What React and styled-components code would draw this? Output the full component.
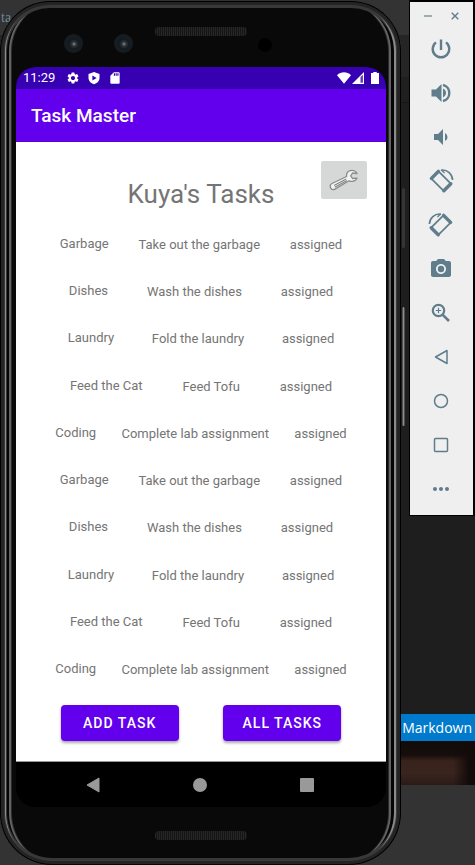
import React from "react";
import styled, { createGlobalStyle } from "styled-components";
import {
  MdVolumeDown,
  MdPhotoCamera,
  MdMoreHoriz,
  MdSettings,
  MdSdCard,
} from "react-icons/md";

const GlobalStyle = createGlobalStyle`
  *, *::before, *::after { box-sizing: border-box; }
  body { margin: 0; background: #1e1e1e; font-family: Roboto, "Liberation Sans", sans-serif; }
  button { font: inherit; border: 0; padding: 0; cursor: pointer; }
  svg { display: block; }
`;

const Desktop = styled.div`
  display: grid;
  grid-template-columns: minmax(0, 1fr) 74px;
  min-height: 100vh;
`;

/* Editor window visible behind the emulator */
const Editor = styled.div`
  grid-area: 1 / 1 / 2 / 3;
  display: flex;
  flex-direction: column;
`;
const EditorTitle = styled.div`
  height: 35px;
  padding: 9px 1px;
  background: #333;
  color: #74899b;
  font: 14px/18px "Liberation Serif", serif;
`;
const EditorTabs = styled.div`
  height: 42px;
  background: #252526;
`;
const EditorCrumbs = styled.div`
  height: 26px;
  background: #1f1f1f;
  border-bottom: 1px solid #161616;
`;
const EditorBody = styled.div`
  flex: 1;
  background: #1e1e1e;
`;
const EditorStatus = styled.div`
  display: flex;
  align-items: center;
  justify-content: flex-end;
  height: 27px;
  padding-right: 3px;
  background: #007acc;
  color: #fff;
  font: 14px/20px "Open Sans", sans-serif;
`;
const VideoStrip = styled.div`
  height: 44px;
  background:
    linear-gradient(to right, transparent calc(100% - 22px), #130b0a calc(100% - 6px)),
    linear-gradient(#120b0a 0, #160e0c 14px, #38231c 20px, #3a251e 32px, #2a1b17 44px);
`;
const Taskbar = styled.div`
  height: 80px;
  background: #333;
`;

const Phone = styled.main`
  position: relative;
  grid-area: 1 / 1;
  display: flex;
  flex-direction: column;
  margin-top: 1px;
  padding: 0 15px 0 16px;
  border-radius: 50px 50px 52px 52px;
  background: #090909;
  box-shadow:
    inset 0 0 0 1px #000,
    inset 0 0 0 4px #242424,
    inset 0 0 0 5px #3a3a3a,
    inset 6px 0 0 0 #8a8a8a,
    inset -7px 0 0 0 #8a8a8a,
    inset 0 0 0 7px #383838,
    inset 9px 0 0 0 #050505,
    inset -10px 0 0 0 #050505,
    inset 11px 0 0 0 #626267,
    inset -12px 0 0 0 #626267,
    inset 12px 0 0 0 #2a2a2a,
    inset -13px 0 0 0 #2a2a2a;
`;
const SideKey = styled.span`
  position: absolute;
  right: -4px;
  top: ${(p) => p.$top};
  width: 3px;
  height: ${(p) => p.$height};
  border-radius: 2px;
  background: ${(p) => p.$color};
`;
const TopBezel = styled.div`
  display: grid;
  grid-template-columns: 1fr 92px 1fr;
  height: 66px;
  padding-top: 26px;
`;
const BottomBezel = styled.div`
  display: flex;
  justify-content: center;
  height: 58px;
  padding-top: 24px;
`;
const Grille = styled.div`
  width: 92px;
  height: 9px;
  border-radius: 4px;
  background: repeating-linear-gradient(to right, #262626 0 1px, #151515 1px 2px);
`;
const Lenses = styled.div`
  display: flex;
  gap: 31px;
  padding: 7px 0 0 48px;
`;
const Lens = styled.span`
  width: 19px;
  height: 19px;
  border: 4px solid #151d22;
  border-radius: 50%;
  background: radial-gradient(circle at 55% 55%, #696e73 0 1px, #30363b 2px, #14191d 5px);
`;
const Sensor = styled.span`
  width: 14px;
  height: 14px;
  margin: 11px 0 0 11px;
  border-radius: 50%;
  background: #000;
`;

const Screen = styled.section`
  flex: 1;
  display: flex;
  flex-direction: column;
  overflow: hidden;
  border-radius: 20px;
  background: #000;
`;
const StatusBar = styled.div`
  display: flex;
  align-items: center;
  gap: 7px;
  height: 22px;
  padding: 0 7px;
  background: #3700b3;
  color: #fff;
`;
const Clock = styled.time`
  margin-right: 4px;
  font-size: 13px;
  line-height: 22px;
`;
const StatusIcons = styled.div`
  display: flex;
  align-items: center;
  gap: ${(p) => p.$gap};
  margin-left: ${(p) => (p.$end ? "auto" : "0")};
`;
const AppBar = styled.header`
  display: flex;
  align-items: center;
  height: 53px;
  padding: 2px 15px 0;
  border-bottom: 1px solid #5b00d6;
  background: #6200ee;
  color: #fff;
`;
const AppTitle = styled.h1`
  margin: 0;
  font-size: 19px;
  line-height: 24px;
  font-weight: 500;
`;
const Content = styled.div`
  flex: 1;
  display: flex;
  flex-direction: column;
  background: #fff;
  color: #757575;
`;
const Heading = styled.div`
  display: grid;
  grid-template-columns: 1fr auto 1fr;
  padding: 19px 19px 0;
`;
const PageTitle = styled.h2`
  grid-column: 2;
  margin: 14px 0 0;
  font-size: 26px;
  line-height: 38px;
  font-weight: 400;
`;
const SettingsButton = styled.button`
  justify-self: end;
  display: grid;
  place-items: center;
  width: 46px;
  height: 38px;
  border-radius: 2px;
  background: #d6d7d7;
`;
const TaskList = styled.ul`
  flex: 1;
  display: grid;
  grid-auto-rows: 1fr;
  margin: 8px 14px 0;
  padding: 0;
  list-style: none;
`;
const TaskRow = styled.li`
  display: flex;
  align-items: center;
  justify-content: space-evenly;
  font-size: 13px;
  line-height: 18px;
`;
const TaskName = styled.span`
  padding-bottom: 2px;
`;
const Actions = styled.div`
  display: flex;
  justify-content: space-evenly;
  padding: 11px 0 20px;
`;
const ActionButton = styled.button`
  width: 118px;
  height: 36px;
  border-radius: 4px;
  background: #6200ee;
  box-shadow: 0 2px 3px rgba(0, 0, 0, 0.35);
  color: #fff;
  font-size: 14px;
  font-weight: 500;
  letter-spacing: 1px;
  text-transform: uppercase;
`;
const NavBar = styled.nav`
  display: flex;
  align-items: center;
  justify-content: center;
  gap: 87px;
  height: 46px;
  padding-right: 2px;
  border-top: 1px solid #999;
  background: #000;
`;
const NavButton = styled.button`
  display: grid;
  place-items: center;
  width: 20px;
  height: 20px;
  background: none;
`;

const Toolbar = styled.aside`
  grid-area: 1 / 2;
  align-self: start;
  justify-self: end;
  display: flex;
  flex-direction: column;
  width: 66px;
  height: 516px;
  padding-right: 2px;
  border: 1px solid #000;
  border-width: 2px 2px 1px 1px;
  background: #efefef;
  color: #5f7d8b;
`;
const WindowControls = styled.div`
  display: flex;
  justify-content: center;
  gap: 11px;
  height: 25px;
  padding: 6px 0 0 1px;
`;
const ToolButton = styled.button`
  display: grid;
  place-items: center;
  width: ${(p) => (p.$small ? "16px" : "100%")};
  height: ${(p) => (p.$small ? "16px" : "44px")};
  background: none;
  color: inherit;
`;

const Power = () => (
  <svg width="24" height="24" viewBox="0 0 24 24" fill="none" stroke="currentColor" strokeWidth="2.400">
    <path d="M12 2.500V13" />
    <path d="M7 5.400A8.300 8.300 0 1 0 17 5.400" />
  </svg>
);
const VolumeUp = () => (
  <svg width="24" height="24" viewBox="0 0 24 24" fill="currentColor">
    <path d="M2.500 8.500V15.500H7L12.500 21V3L7 8.500Z" />
    <path d="M14 7.600C15.800 8.500 17 10.100 17 12S15.800 15.500 14 16.400Z" />
    <path d="M14 4C17.700 4.800 20.300 8 20.300 12S17.700 19.200 14 20" fill="none" stroke="currentColor" strokeWidth="2.400" />
  </svg>
);
const ZoomGlass = () => (
  <svg width="24" height="24" viewBox="0 0 24 24" fill="none" stroke="currentColor">
    <circle cx="9.500" cy="9.500" r="5.700" strokeWidth="2.200" />
    <path d="M13.800 13.800 20 20" strokeWidth="2.600" />
    <path d="M9.500 6.800V12.200M6.800 9.500H12.200" strokeWidth="1.200" />
  </svg>
);
const Rotate = ({ flip }) => (
  <svg width="26" height="26" viewBox="0 0 26 26" fill="none" stroke="currentColor">
    <g transform={flip ? "translate(26 0) scale(-1 1)" : undefined}>
      <path d="M10.800 3.600 22.600 15.400 15.400 22.600 3.600 10.800Z" strokeWidth="1.700" strokeLinejoin="round" />
      <path d="M3.400 10.400 10.400 3.400M15.800 22.800 22.800 15.800" strokeWidth="3.400" strokeLinecap="round" />
      <path d="M13.500 2C19.500 1.500 24.300 6 24.600 12" strokeWidth="1.600" />
      <path d="M13 1.800 16.600 5" strokeWidth="1.200" />
    </g>
  </svg>
);
const Wrench = () => (
  <svg width="30" height="24" viewBox="0 0 30 24">
    <path
      d="M28 5.600C27 3 24 1.800 21.200 2.700 18.400 3.500 17.300 5.700 17.600 8.500L3 15.500C1 16.500 1 18.500 1.800 20.100 2.600 21.600 4.200 22 6 21.100L20 12.800C23 14 26.500 13.200 28 10.200L23.500 10.500 21.700 7.800 23.500 5Z"
      fill="#f2f2f2" stroke="#8b8b8b" strokeWidth="1.300" strokeLinejoin="round"
    />
    <path d="M5.500 17.300 16.800 11.300M6.200 19 17.500 12.800" stroke="#858585" strokeWidth="1.100" strokeLinecap="round" />
  </svg>
);
const Shield = () => (
  <svg width="14" height="14" viewBox="0 0 14 14">
    <path d="M7 1 12.500 3V7C12.500 10 10 12.300 7 13.300 4 12.300 1.500 10 1.500 7V3Z" fill="#fff" />
    <path d="M5.400 4.400V9.600L9.600 7Z" fill="#3700b3" />
  </svg>
);
const Wifi = () => (
  <svg width="14" height="12" viewBox="0 0 14 12">
    <path d="M0 3.200C4-.6 10-.6 14 3.200L7 11.700Z" fill="#fff" />
  </svg>
);
const Signal = () => (
  <svg width="12" height="12" viewBox="0 0 12 12">
    <path d="M0 12 12 0V12Z" fill="#fff" />
    <path d="M8.500 5 10.900 2.700V10.800H8.500Z" fill="#5f35c4" />
  </svg>
);
const Battery = () => (
  <svg width="8" height="12" viewBox="0 0 8 12">
    <path d="M2.300 0H5.700V1H8V12H0V1H2.300Z" fill="#fff" />
  </svg>
);
const Minimize = () => (
  <svg width="8" height="8" viewBox="0 0 8 8"><path d="M0 4H8" stroke="#9aaeb7" strokeWidth="2" /></svg>
);
const Close = () => (
  <svg width="8" height="8" viewBox="0 0 8 8"><path d="M.7.7 7.300 7.300M7.300.7.7 7.300" stroke="currentColor" strokeWidth="1.400" /></svg>
);
const Outline = ({ d, children }) => (
  <svg width="16" height="16" viewBox="0 0 16 16" fill="none" stroke="currentColor" strokeWidth="1.500" strokeLinejoin="round">
    {d ? <path d={d} /> : children}
  </svg>
);

const tools = [
  ["Power", <Power />],
  ["Volume up", <VolumeUp />],
  ["Volume down", <MdVolumeDown size={24} />],
  ["Rotate left", <Rotate />],
  ["Rotate right", <Rotate flip />],
  ["Screenshot", <MdPhotoCamera size={24} />],
  ["Zoom", <ZoomGlass />],
  ["Back", <Outline d="M14 1.500V14.500L2.500 8Z" />],
  ["Home", <Outline><circle cx="8" cy="8" r="6.500" /></Outline>],
  ["Overview", <Outline><rect x="1.500" y="1.500" width="13" height="13" rx="1" /></Outline>],
  ["More", <MdMoreHoriz size={24} />],
];

const baseTasks = [
  ["Garbage", "Take out the garbage"],
  ["Dishes", "Wash the dishes"],
  ["Laundry", "Fold the laundry"],
  ["Feed the Cat", "Feed Tofu"],
  ["Coding", "Complete lab assignment"],
];
const tasks = [...baseTasks, ...baseTasks];

export default function App() {
  return (
    <>
      <GlobalStyle />
      <Desktop>
        <Editor>
          <EditorTitle>ta</EditorTitle>
          <EditorTabs />
          <EditorCrumbs />
          <EditorBody />
          <EditorStatus>Markdown</EditorStatus>
          <VideoStrip />
          <Taskbar />
        </Editor>

        <Phone>
          <SideKey $top="187px" $height="60px" $color="#353535" />
          <SideKey $top="306px" $height="119px" $color="linear-gradient(to right, #333, #8a8a8a, #333)" />
          <TopBezel>
            <Lenses><Lens /><Lens /></Lenses>
            <Grille />
            <Sensor />
          </TopBezel>
          <Screen>
            <StatusBar>
              <Clock>11:29</Clock>
              <StatusIcons $gap="7px">
                <MdSettings size={14} />
                <Shield />
                <MdSdCard size={14} />
              </StatusIcons>
              <StatusIcons $gap="7px" $end>
                <StatusIcons $gap="1px">
                  <Wifi />
                  <Signal />
                </StatusIcons>
                <Battery />
              </StatusIcons>
            </StatusBar>
            <AppBar><AppTitle>Task Master</AppTitle></AppBar>
            <Content>
              <Heading>
                <PageTitle>Kuya's Tasks</PageTitle>
                <SettingsButton aria-label="Settings"><Wrench /></SettingsButton>
              </Heading>
              <TaskList>
                {tasks.map(([name, detail], i) => (
                  <TaskRow key={i}>
                    <TaskName>{name}</TaskName>
                    <span>{detail}</span>
                    <span>assigned</span>
                  </TaskRow>
                ))}
              </TaskList>
              <Actions>
                <ActionButton>Add Task</ActionButton>
                <ActionButton>All Tasks</ActionButton>
              </Actions>
            </Content>
            <NavBar>
              <NavButton aria-label="Back">
                <svg width="16" height="16" viewBox="0 0 16 16"><path d="M14 1V15L2 8Z" fill="#999" stroke="#999" strokeLinejoin="round" /></svg>
              </NavButton>
              <NavButton aria-label="Home">
                <svg width="14" height="14" viewBox="0 0 14 14"><circle cx="7" cy="7" r="7" fill="#999" /></svg>
              </NavButton>
              <NavButton aria-label="Recent apps">
                <svg width="14" height="14" viewBox="0 0 14 14"><rect width="14" height="14" rx="1" fill="#999" /></svg>
              </NavButton>
            </NavBar>
          </Screen>
          <BottomBezel><Grille /></BottomBezel>
        </Phone>

        <Toolbar>
          <WindowControls>
            <ToolButton $small aria-label="Minimize"><Minimize /></ToolButton>
            <ToolButton $small aria-label="Close"><Close /></ToolButton>
          </WindowControls>
          {tools.map(([label, icon]) => (
            <ToolButton key={label} aria-label={label}>{icon}</ToolButton>
          ))}
        </Toolbar>
      </Desktop>
    </>
  );
}
